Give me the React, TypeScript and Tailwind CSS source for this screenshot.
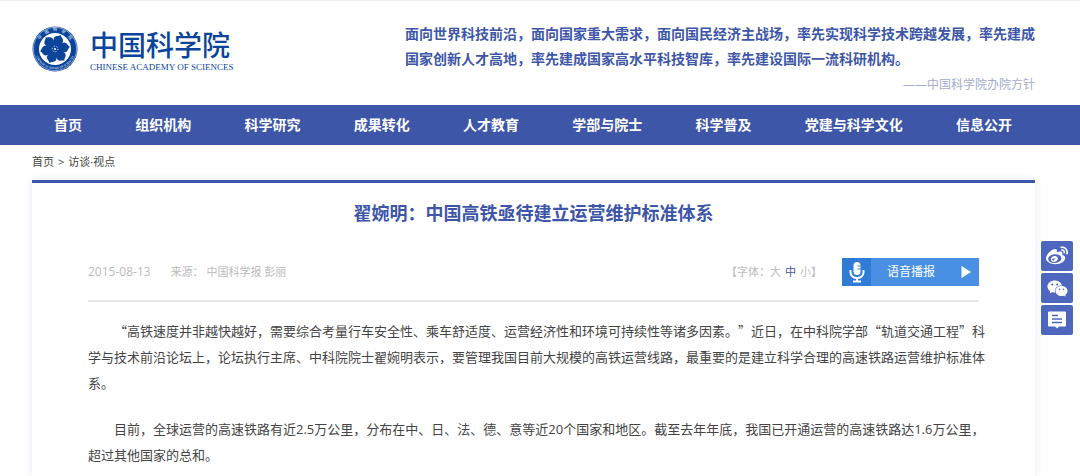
import { useState } from 'react';
import type { ReactNode } from 'react';
import clsx from 'clsx';
import { FaWeibo } from 'react-icons/fa';
import { AiFillWechat } from 'react-icons/ai';

const menu = [
  '首页',
  '组织机构',
  '科学研究',
  '成果转化',
  '人才教育',
  '学部与院士',
  '科学普及',
  '党建与科学文化',
  '信息公开',
];

const sizes = ['大', '中', '小'];

function Emblem() {
  return (
    <svg viewBox="0 0 46 46" className="size-[46px] shrink-0 text-[#0b459b]" aria-hidden="true">
      <defs>
        <path id="ringTop" d="M5.4 23a17.6 17.6 0 0 1 35.2 0" />
        <path id="ringBottom" d="M2.8 23a20.2 20.2 0 0 0 40.4 0" />
      </defs>
      <circle cx="23" cy="23" r="22.5" fill="currentColor" />
      <circle cx="23" cy="23" r="21.6" fill="none" stroke="#fff" strokeWidth="0.5" />
      <circle cx="23" cy="23" r="16" fill="#fff" />
      <g fill="currentColor">
        {[20, 80, 140, 200, 260, 320].map((angle) => (
          <path
            key={angle}
            transform={`rotate(${angle} 23 23)`}
            d="M23 23C20.6 20 17.8 16.5 18.2 12.4C19.4 9.8 22 10 23.4 8C24.6 10 27.2 10.2 28 12.8C28 16.5 25.4 20 23 23Z"
          />
        ))}
        <circle cx="23" cy="23" r="6" />
      </g>
      <circle cx="23" cy="23" r="2.8" fill="none" stroke="#fff" strokeWidth="1" strokeDasharray="1 1.9" />
      <circle cx="23" cy="23" r="1" fill="#fff" />
      <g fill="#fff" textAnchor="middle">
        <text fontSize="4" fontFamily="Noto Sans CJK SC, sans-serif">
          <textPath href="#ringTop" startOffset="50%">中　国　科　学　院</textPath>
        </text>
        <text fontSize="3" fontFamily="Liberation Serif, serif">
          <textPath href="#ringBottom" startOffset="50%">CHINESE ACADEMY OF SCIENCES</textPath>
        </text>
      </g>
    </svg>
  );
}

function Microphone() {
  return (
    <svg viewBox="0 0 16 22" className="h-[22px] w-4" fill="none" stroke="#fff" strokeWidth="2">
      <rect x="4.5" y="1" width="7" height="13" rx="3.5" fill="#fff" stroke="none" />
      <path d="M1.5 9v2.5a6.5 5.5 0 0 0 13 0V9M8 17V20M4 20.5h8" />
      <path d="M8.5 5h3M8.5 8h3" stroke="#2f7bd6" strokeWidth="1" />
    </svg>
  );
}

function Comment() {
  return (
    <svg viewBox="0 0 18 18" className="size-[18px]">
      <path d="M1 0.5h16a1 1 0 0 1 1 1V14.5a1 1 0 0 1-1 1h-6l-2 2-2-2H1a1 1 0 0 1-1-1V1.5a1 1 0 0 1 1-1Z" fill="#fff" />
      <path d="M4 4.5h6M4 8h10M4 11.5h10" stroke="#4d67bf" strokeWidth="1.5" />
    </svg>
  );
}

function SideButton({ label, children }: { label: string; children: ReactNode }) {
  return (
    <button
      type="button"
      aria-label={label}
      className="flex h-[30px] w-8 items-center justify-center rounded-xs bg-[#4d67bf] text-white hover:bg-[#3d56a8]"
    >
      {children}
    </button>
  );
}

export default function App() {
  const [size, setSize] = useState('中');

  return (
    <div className="flex min-h-screen flex-col border-t border-[#eeeeee] bg-white font-['Open_Sans','Noto_Sans_CJK_SC',sans-serif] text-[#444444]">
      <header className="mr-[45px] ml-8 flex h-[104px] items-start justify-between">
        <a href="#" className="flex items-center gap-3 pt-6 text-[#0b459b]">
          <Emblem />
          <div className="flex flex-col pt-1">
            <span className="text-[28px] leading-8 font-medium">中国科学院</span>
            <span className="font-['Liberation_Serif',serif] text-[9px] leading-3 whitespace-nowrap">
              CHINESE ACADEMY OF SCIENCES
            </span>
          </div>
        </a>
        <div className="pt-5 whitespace-nowrap">
          <p className="text-sm leading-[25px] font-bold text-[#3d56a8]">
            面向世界科技前沿，面向国家重大需求，面向国民经济主战场，率先实现科学技术跨越发展，率先建成
            <br />
            国家创新人才高地，率先建成国家高水平科技智库，率先建设国际一流科研机构。
          </p>
          <p className="text-right text-xs leading-7 text-[#a3acca]">——中国科学院办院方针</p>
        </div>
      </header>

      <nav className="bg-[#3d56a8] px-[54px]">
        <ul className="mr-[14px] flex h-10 items-center justify-between text-sm font-bold text-white">
          {menu.map((item) => (
            <li key={item}>
              <a href="#" className="hover:underline">{item}</a>
            </li>
          ))}
        </ul>
      </nav>

      <main className="mr-[45px] ml-8 flex flex-1 flex-col">
        <div className="flex h-[35px] items-center gap-1 text-[11px]">
          <a href="#">首页</a>
          <span>&gt;</span>
          <a href="#">访谈·视点</a>
        </div>

        <article className="flex-1 border-t-3 border-[#3d56a8] px-14 shadow-[0_0_8px_rgba(61,86,168,0.14)]">
          <h1 className="pt-4 text-center text-lg leading-7 font-bold text-[#3d56a8]">
            翟婉明：中国高铁亟待建立运营维护标准体系
          </h1>

          <div className="mt-4 flex h-[59px] items-end justify-between border-b-2 border-[#e6e6e6] pb-[14px] text-xs text-[#bbbbbb]">
            <div className="flex h-7 items-center gap-5">
              <span>2015-08-13</span>
              <span className="text-[11px]">来源： 中国科学报 彭丽</span>
            </div>
            <div className="flex items-center gap-5">
              <div className="flex text-[11px]">
                <span>【字体：</span>
                <div className="flex gap-1">
                  {sizes.map((s) => (
                    <button
                      key={s}
                      type="button"
                      className={clsx(s === size && 'text-[#3d56a8]')}
                      onClick={() => setSize(s)}
                    >
                      {s}
                    </button>
                  ))}
                </div>
                <span>】</span>
              </div>
              <button type="button" className="flex h-7 w-[137px] items-center bg-[#4990e2] text-white">
                <span className="flex h-full w-[29px] items-center justify-center bg-[#2f7bd6]">
                  <Microphone />
                </span>
                <span className="ml-4">语音播报</span>
                <svg viewBox="0 0 10 12" className="mr-2 ml-auto h-3 w-[10px]" fill="#fff">
                  <path d="M0.5 0 10 6 0.5 12Z" />
                </svg>
              </button>
            </div>
          </div>

          <div className="flex flex-col gap-5 pt-4 text-[13px] leading-[26px] whitespace-nowrap">
            <p className="indent-[2em] font-['Noto_Sans_CJK_SC',sans-serif] [text-spacing-trim:space-all]">
              “高铁速度并非越快越好，需要综合考量行车安全性、乘车舒适度、运营经济性和环境可持续性等诸多因素。”近日，在中科院学部“轨道交通工程”科
              <br />
              学与技术前沿论坛上，论坛执行主席、中科院院士翟婉明表示，要管理我国目前大规模的高铁运营线路，最重要的是建立科学合理的高速铁路运营维护标准体
              <br />
              系。
            </p>
            <p className="indent-[2em]">
              目前，全球运营的高速铁路有近2.5万公里，分布在中、日、法、德、意等近20个国家和地区。截至去年年底，我国已开通运营的高速铁路达1.6万公里，
              <br />
              超过其他国家的总和。
            </p>
          </div>
        </article>
      </main>

      <aside className="fixed top-[241px] right-[7px] flex flex-col gap-[2px]">
        <SideButton label="微博">
          <FaWeibo className="size-[22px]" />
        </SideButton>
        <SideButton label="微信">
          <AiFillWechat className="size-[23px]" />
        </SideButton>
        <SideButton label="留言">
          <Comment />
        </SideButton>
      </aside>
    </div>
  );
}
